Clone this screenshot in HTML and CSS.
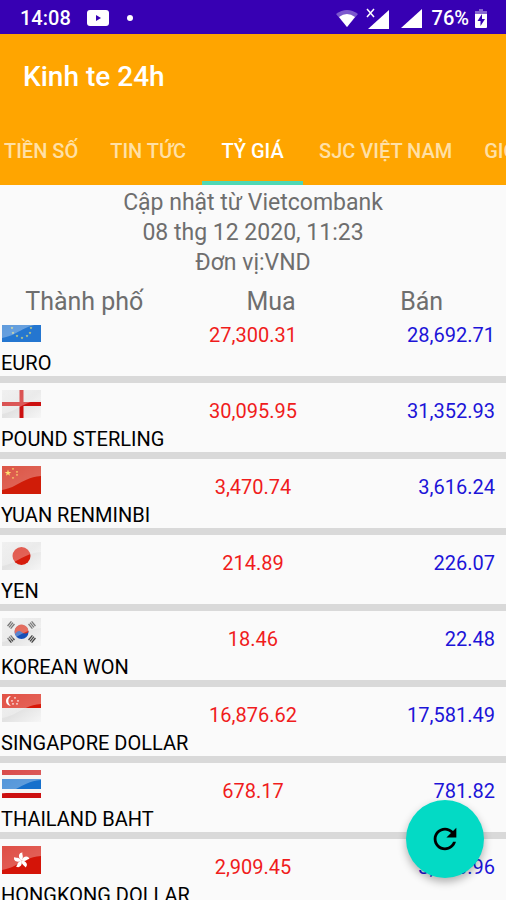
FILE: index.html
```html
<!DOCTYPE html>
<html lang="vi">
<head>
<meta charset="UTF-8">
<meta name="viewport" content="width=device-width, initial-scale=1">
<title>Kinh te 24h</title>
<link rel="stylesheet" href="styles.css">
</head>
<body>
<svg class="defs" aria-hidden="true">
    <defs>
        <linearGradient id="shine" x1="0" y1="0" x2="1" y2="1">
            <stop offset="0" stop-color="#fff" stop-opacity=".25"/>
            <stop offset="1" stop-color="#fff" stop-opacity=".35"/>
        </linearGradient>
        <linearGradient id="paper" x1="0" y1="0" x2="1" y2="1">
            <stop offset="0" stop-color="#ececec"/>
            <stop offset=".5" stop-color="#e2e2e2"/>
            <stop offset="1" stop-color="#f6f6f6"/>
        </linearGradient>
        <path id="gloss" d="M0 0H39V10C27 11 22 15 14 19C9 22 4 23 0 24Z" fill="url(#shine)"/>
        <path id="star" d="M0-1L.23-.31H.95L.36.12L.59.81L0 .38L-.59.81L-.36.12L-.95-.31H-.23Z"/>
        <g id="trigram"><path d="M-3-2H3M-3 0H3M-3 2H3" stroke-width="1.3"/></g>
    </defs>
</svg>
<div class="app">
    <div class="status-bar">
        <span class="clock">14:08</span>
        <svg class="youtube" width="22" height="16" viewBox="0 0 22 16"><rect width="22" height="16" rx="3" fill="#fff"/><path d="M9 5L14 8L9 11Z" fill="#3700b3"/></svg>
        <span class="dot"></span>
        <svg class="wifi" width="22" height="17" viewBox="0 0 22 17"><path d="M0 4Q11-4 22 4L11 17Z" fill="#fff" opacity=".35"/><path d="M3 7Q11 1 19 7L11 17Z" fill="#fff"/></svg>
        <svg class="signal" width="24" height="21" viewBox="0 0 24 21"><path d="M23 2V21H2Z" fill="#fff"/><path d="M1 1L8 9M8 1L1 9" stroke="#fff" stroke-width="1.5"/></svg>
        <svg class="signal-two" width="21" height="19" viewBox="0 0 21 19"><path d="M21 0V19H0Z" fill="#fff"/></svg>
        <span class="percent">76%</span>
        <svg width="12" height="19" viewBox="0 0 12 19"><path d="M4 0H8V2H12V6H0V2H4Z" fill="#fff" opacity=".4"/><path d="M0 5H12V18Q12 19 11 19H1Q0 19 0 18Z" fill="#fff"/><path d="M7 5L2.500 12H5.500V17L10 10H7Z" fill="#3700b3"/></svg>
    </div>
    <header class="app-bar">
        <h1>Kinh te 24h</h1>
        <nav class="tabs">
            <a href="#">TIỀN SỐ</a>
            <a href="#">TIN TỨC</a>
            <a href="#" class="active">TỶ GIÁ</a>
            <a href="#">SJC VIỆT NAM</a>
            <a href="#">GIO</a>
        </nav>
    </header>
    <main>
        <div class="info">
            <p>Cập nhật từ Vietcombank</p>
            <p>08 thg 12 2020, 11:23</p>
            <p>Đơn vị:VND</p>
        </div>
        <table class="rates">
            <thead>
                <tr><th>Thành phố</th><th class="buy">Mua</th><th>Bán</th></tr>
            </thead>
            <tbody>
                <tr class="first">
                    <td class="name">
                        <svg width="39" height="17" viewBox="0 11 39 17"><rect width="39" height="28" fill="#2476d0"/><g fill="#e8e070"><use href="#star" transform="translate(10 14) scale(1.500)"/><use href="#star" transform="translate(11 19) scale(1.500)"/><use href="#star" transform="translate(15 22) scale(1.500)"/><use href="#star" transform="translate(20 24) scale(1.500)"/><use href="#star" transform="translate(25 22) scale(1.500)"/><use href="#star" transform="translate(28 19) scale(1.500)"/><use href="#star" transform="translate(29 14) scale(1.500)"/></g><use href="#gloss"/></svg>
                        EURO
                    </td>
                    <td class="buy">27,300.31</td><td class="sell">28,692.71</td>
                </tr>
                <tr>
                    <td class="name">
                        <svg width="39" height="28" viewBox="0 0 39 28"><rect width="39" height="28" fill="url(#paper)"/><path d="M19.500 0V28M0 14H39" stroke="#cc1010" stroke-width="4"/><use href="#gloss"/></svg>
                        POUND STERLING
                    </td>
                    <td class="buy">30,095.95</td><td class="sell">31,352.93</td>
                </tr>
                <tr>
                    <td class="name">
                        <svg width="39" height="28" viewBox="0 0 39 28"><rect width="39" height="28" fill="#d01c08"/><use href="#gloss"/><g fill="#ffdf70"><use href="#star" transform="translate(6 7) scale(3.500)"/><use href="#star" transform="translate(11 3) scale(1.300)"/><use href="#star" transform="translate(15 6) scale(1.300)"/><use href="#star" transform="translate(15 9) scale(1.300)"/><use href="#star" transform="translate(11 12) scale(1.300)"/></g></svg>
                        YUAN RENMINBI
                    </td>
                    <td class="buy">3,470.74</td><td class="sell">3,616.24</td>
                </tr>
                <tr>
                    <td class="name">
                        <svg width="39" height="28" viewBox="0 0 39 28"><rect width="39" height="28" fill="url(#paper)"/><circle cx="19.500" cy="14" r="9" fill="#d61c0c"/><use href="#gloss"/></svg>
                        YEN
                    </td>
                    <td class="buy">214.89</td><td class="sell">226.07</td>
                </tr>
                <tr>
                    <td class="name">
                        <svg width="39" height="28" viewBox="0 0 39 28"><rect width="39" height="28" fill="url(#paper)"/><circle cx="19.500" cy="14" r="7" fill="#1650b8"/><path d="M13 11A7 7 0 0 1 26.500 14Q23 17 19.500 14T13 16Q12 13 13 11Z" fill="#d8301c"/><g stroke="#444"><use href="#trigram" transform="translate(9 7) rotate(-50)"/><use href="#trigram" transform="translate(30 7) rotate(50)"/><use href="#trigram" transform="translate(9 21) rotate(50)"/><use href="#trigram" transform="translate(30 21) rotate(-50)"/></g><use href="#gloss"/></svg>
                        KOREAN WON
                    </td>
                    <td class="buy">18.46</td><td class="sell">22.48</td>
                </tr>
                <tr>
                    <td class="name">
                        <svg width="39" height="28" viewBox="0 0 39 28"><rect width="39" height="28" fill="url(#paper)"/><rect width="39" height="14" fill="#d81808"/><use href="#gloss"/><path d="M9 2A5 5 0 1 0 9 12A6 6 0 0 1 9 2Z" fill="#fff"/><g fill="#fff"><use href="#star" transform="translate(13 4) scale(1.300)"/><use href="#star" transform="translate(10 7) scale(1.300)"/><use href="#star" transform="translate(16 7) scale(1.300)"/><use href="#star" transform="translate(11 10) scale(1.300)"/><use href="#star" transform="translate(15 10) scale(1.300)"/></g></svg>
                        SINGAPORE DOLLAR
                    </td>
                    <td class="buy">16,876.62</td><td class="sell">17,581.49</td>
                </tr>
                <tr>
                    <td class="name">
                        <svg width="39" height="28" viewBox="0 0 39 28"><rect width="39" height="28" fill="#f4f4f4"/><path d="M0 0H39V5H0ZM0 23H39V28H0Z" fill="#cc1010"/><path d="M0 9H39V19H0Z" fill="#1670cc"/><use href="#gloss"/></svg>
                        THAILAND BAHT
                    </td>
                    <td class="buy">678.17</td><td class="sell">781.82</td>
                </tr>
                <tr>
                    <td class="name">
                        <svg width="39" height="28" viewBox="0 0 39 28"><rect width="39" height="28" fill="#d41408"/><use href="#gloss"/><g fill="#fff" transform="translate(19.500 14.500)"><path id="petal" d="M0 0C-4-3-3-8 1-8C0-6 3-4 0 0Z"/><use href="#petal" transform="rotate(72)"/><use href="#petal" transform="rotate(144)"/><use href="#petal" transform="rotate(216)"/><use href="#petal" transform="rotate(288)"/></g></svg>
                        HONGKONG DOLLAR
                    </td>
                    <td class="buy">2,909.45</td><td class="sell">3,033.96</td>
                </tr>
            </tbody>
        </table>
    </main>
    <button class="refresh" type="button" aria-label="Refresh">
        <svg width="34" height="34" viewBox="0 0 24 24"><path d="M17.650 6.350C16.200 4.900 14.210 4 12 4c-4.420 0-7.990 3.580-7.990 8s3.570 8 7.990 8c3.730 0 6.840-2.550 7.730-6h-2.080c-.82 2.330-3.040 4-5.650 4-3.310 0-6-2.690-6-6s2.690-6 6-6c1.660 0 3.140.69 4.220 1.780L13 11h7V4l-2.350 2.350z"/></svg>
    </button>
</div>
</body>
</html>
```
FILE: styles.css
```css
* {
    box-sizing: border-box;
}
body {
    margin: 0;
    background: #fafafa;
    font-family: Roboto, "Noto Sans", sans-serif;
    font-size: 20px;
    line-height: 24px;
}
.defs {
    position: absolute;
    width: 0;
    height: 0;
}
.app {
    height: 100vh;
    overflow: hidden;
}

/* status bar */
.status-bar {
    display: flex;
    align-items: center;
    height: 34px;
    padding: 2px 19px 0 20px;
    background: #3700b3;
    color: #fff;
    font-weight: 500;
}
.youtube {
    margin-left: 16px;
}
.dot {
    width: 6px;
    height: 6px;
    margin-left: 18px;
    border-radius: 50%;
    background: #fff;
}
.wifi {
    margin-left: auto;
}
.signal {
    margin-left: 8px;
}
.signal-two {
    margin-left: 11px;
}
.percent {
    margin: 0 6px 0 10px;
}

/* title and tabs */
.app-bar {
    background: #ffa500;
    color: #fff;
}
h1 {
    margin: 0;
    padding: 2px 23px 0;
    font-size: 28px;
    font-weight: 500;
    line-height: 82px;
}
.tabs {
    display: flex;
    margin-left: -12px;
    overflow: hidden;
}
.tabs a {
    flex: none;
    height: 67px;
    padding: 0 16px;
    border-bottom: 4px solid transparent;
    color: #ffe0a6;
    font-weight: 500;
    line-height: 67px;
    text-align: center;
    text-decoration: none;
}
.tabs .active {
    min-width: 101px;
    border-color: #4fd8b4;
    color: #fff;
}

/* source of the rates */
.info {
    padding-top: 3px;
    color: #6e6e6e;
    font-size: 23px;
    line-height: 30px;
    text-align: center;
}
.info p {
    margin: 0;
}

/* rates */
.rates {
    width: 100%;
    table-layout: fixed;
    border-collapse: collapse;
}
.rates th {
    height: 45px;
    padding: 2px 0 0;
    color: #6e6e6e;
    font-size: 25px;
    font-weight: 400;
}
.rates th.buy {
    padding-left: 36px;
}
.rates td {
    padding: 0 0 29px;
    vertical-align: bottom;
}
.rates tbody tr {
    border-bottom: 7px solid #d9d9d9;
}
.rates td.name {
    padding: 7px 0 1px 1px;
    white-space: nowrap;
}
.rates .first td.name {
    padding-top: 0;
}
.name svg {
    display: block;
    margin: 0 0 9px 1px;
}
td.buy {
    color: #f01c1c;
    text-align: center;
}
.rates td.sell {
    padding-right: 11px;
    color: #1c14d8;
    text-align: right;
}

.refresh {
    position: fixed;
    right: 22px;
    bottom: 22px;
    display: flex;
    align-items: center;
    justify-content: center;
    width: 78px;
    height: 78px;
    padding: 0;
    border: 0;
    border-radius: 50%;
    background: #03dac5;
    box-shadow: 0 4px 9px rgba(0, 0, 0, .3);
}
```
